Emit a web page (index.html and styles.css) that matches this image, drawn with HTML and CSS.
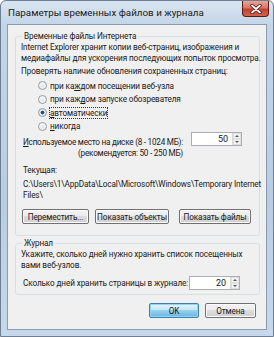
FILE: index.html
```html
<!DOCTYPE html>
<html lang="ru">
<head>
<meta charset="utf-8">
<title>Параметры временных файлов и журнала</title>
<link rel="stylesheet" href="styles.css">
</head>
<body>
<div class="window">
  <div class="titlebar">
    <span class="title">Параметры временных файлов и журнала</span>
    <div class="close"><svg width="12" height="10" viewBox="0 0 12 10"><path d="M2 1.5 L10 8.5 M10 1.5 L2 8.5" stroke="#4a1010" stroke-width="3.4" stroke-linecap="round"/><path d="M2 1.5 L10 8.5 M10 1.5 L2 8.5" stroke="#fff" stroke-width="1.8" stroke-linecap="round"/></svg></div>
  </div>
  <div class="client">
    <fieldset class="group g1">
      <legend>Временные файлы Интернета</legend>
      <p class="line">Internet Explorer хранит копии веб-страниц, изображения и</p>
      <p class="line">медиафайлы для ускорения последующих попыток просмотра.</p>
      <p class="line check">Проверять наличие обновления сохраненных страниц:</p>
      <div class="radios">
        <div class="radio"><span class="dot"></span><span>при ка<u>ж</u>дом посещении веб-узла</span></div>
        <div class="radio"><span class="dot"></span><span>при каж<u>д</u>ом запуске обозревателя</span></div>
        <div class="radio"><span class="dot on"></span><span class="focus"><u>а</u>втоматически</span></div>
        <div class="radio"><span class="dot"></span><span><u>н</u>икогда</span></div>
      </div>
      <div class="disk">
        <div class="disklabel">
          <p class="line"><u>И</u>спользуемое место на диске (8 - 1024 МБ):</p>
          <p class="line">(рекомендуется: 50 - 250 МБ)</p>
        </div>
        <div class="spin"><span class="val">50</span><span class="arrows"><i class="up"></i><i class="down"></i></span></div>
      </div>
      <p class="line cur">Текущая:</p>
      <p class="line path">C:\Users\1\AppData\Local\Microsoft\Windows\Temporary Internet</p>
      <p class="line path">Files\</p>
      <div class="btnrow">
        <button class="btn b1">Переместить...</button>
        <button class="btn b2">Показать объекты</button>
        <button class="btn b3">Показать файлы</button>
      </div>
    </fieldset>
    <fieldset class="group g2">
      <legend>Журнал</legend>
      <p class="line">Укажите, сколько дней нужно хранить список посещенных</p>
      <p class="line">вами веб-узлов.</p>
      <div class="days">
        <span class="dayslabel">Сколько дней хранить страницы в журнале:</span>
        <div class="spin"><span class="val">20</span><span class="arrows"><i class="up"></i><i class="down"></i></span></div>
      </div>
    </fieldset>
    <div class="footer">
      <button class="btn ok">OK</button>
      <button class="btn cancel">Отмена</button>
    </div>
  </div>
</div>
</body>
</html>
```
FILE: styles.css
```css
* { box-sizing: border-box; }
html, body { margin: 0; padding: 0; }
body {
  width: 274px; height: 337px; overflow: hidden;
  background: #fff;
  font-family: "Roboto", "Noto Sans", sans-serif;
  font-size: 8.2px;
  letter-spacing: -0.12px;
  color: #1a1a1a;
}
.window {
  width: 274px; height: 337px;
  border: 1px solid #6f7f93;
  border-radius: 6px 6px 0 0;
  background: linear-gradient(180deg, #d9e5f2 0px, #c4d5e8 24px, #b9cde2 200px, #c7d8ea 337px);
  display: flex; flex-direction: column;
  padding: 0 6px 6px 6px;
  overflow: hidden;
}
.titlebar {
  height: 23px; flex: none;
  display: flex; align-items: flex-start; justify-content: space-between;
}
.title {
  font-size: 9.8px; line-height: 11px; letter-spacing: 0;
  margin: 6px 0 0 1px;
  white-space: nowrap;
}
.close {
  width: 27px; height: 16px;
  margin-right: -2px;
  border: 1px solid #5b1c15;
  border-top: none;
  border-radius: 0 0 4px 4px;
  background: linear-gradient(180deg, #e8a493 0%, #d7776a 45%, #c2412f 55%, #d4644f 100%);
  display: flex; align-items: center; justify-content: center;
}
.client {
  flex: 1;
  background: #f0f0f0;
  border: 1px solid #8a9bb0;
  padding: 0 6px 0 7px;
  display: flex; flex-direction: column;
  min-width: 0;
}
p { margin: 0; }
.line { line-height: 11px; white-space: nowrap; }
.group {
  margin: 0;
  border: 1px solid #d5dfe5;
  border-radius: 3px;
  padding: 0 0 0 5px;
  min-width: 0;
  flex: none;
}
.group legend {
  padding: 0 2px;
  margin-left: 1px;
  line-height: 11px;
}
.g1 { margin-top: 6px; height: 205px; }
.check { margin-top: 2px; }
.radios { padding-left: 17px; margin-top: 2px; }
.radio { display: flex; align-items: center; height: 13.5px; white-space: nowrap; }
.dot {
  width: 9px; height: 9px; border-radius: 50%;
  border: 1px solid #8f9aa3;
  background: radial-gradient(circle at 50% 60%, #e4e4e4 0, #f6f6f6 60%, #fff 100%);
  margin-right: 3px; flex: none;
}
.dot.on {
  background: radial-gradient(circle, #1f3b5c 0, #3a6690 35%, #dfe8ef 45%, #f4f4f4 100%);
}
.focus { outline: 1px dotted #333; outline-offset: 0; line-height: 10px; }
.disk { display: flex; align-items: flex-start; margin-top: 4px; }
.disklabel { text-align: right; padding-left: 2px; letter-spacing: -0.25px; }
.spin {
  width: 51px; height: 14px;
  border: 1px solid #abadb3;
  background: #fff;
  display: flex; align-items: stretch;
  flex: none;
}
.disk .spin { margin: -5px 17px 0 auto; }
.val { flex: 1; text-align: right; padding-right: 4px; line-height: 12px; font-size: 9px; }
.arrows { width: 9px; display: flex; flex-direction: column; border-left: 1px solid #d8d8d8; }
.arrows i { flex: 1; display: flex; align-items: center; justify-content: center; background: #f3f3f3; border: 1px solid #e0e0e0; }
.arrows i::before { content: ""; border-left: 2px solid transparent; border-right: 2px solid transparent; }
.arrows .up::before { border-bottom: 2px solid #555; }
.arrows .down::before { border-top: 2px solid #555; }
.cur { margin-top: 6px; padding-left: 2px; }
.path { padding-left: 2px; }
.cur + .path { margin-top: 3px; }
.btnrow { display: flex; margin-top: 8px; padding-left: 1px; }
.btn {
  font: inherit; letter-spacing: inherit; color: #1a1a1a;
  height: 15px; padding: 0;
  border: 1px solid #707070;
  border-radius: 2px;
  background: linear-gradient(180deg, #f2f2f2 0%, #ebebeb 49%, #dddddd 50%, #cfcfcf 100%);
  box-shadow: inset 0 0 0 1px #fcfcfc;
  line-height: 12px;
  white-space: nowrap;
  flex: none;
}
.b1 { width: 67px; }
.b2 { width: 74px; margin-left: 6px; }
.b3 { width: 72px; margin-left: 10px; }
.g2 { margin-top: 2px; height: 57px; }
.days { display: flex; align-items: center; margin-top: 5px; }
.dayslabel { line-height: 11px; padding-left: 2px; white-space: nowrap; }
.days .spin { margin: 0 19px 0 auto; }
.footer { display: flex; justify-content: flex-end; padding-right: 4px; margin-top: 8px; }
.ok {
  width: 50px;
  border-color: #3c7fb1;
  background: linear-gradient(180deg, #e5f4fc 0%, #c4e5f6 49%, #98d1ef 50%, #68b3db 100%);
  box-shadow: inset 0 0 0 1px #8cd7f5;
}
.cancel { width: 51px; margin-left: 6px; }
```
